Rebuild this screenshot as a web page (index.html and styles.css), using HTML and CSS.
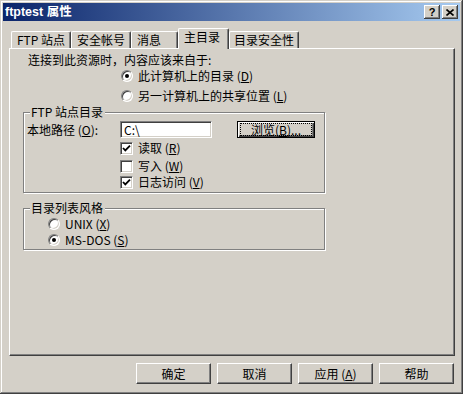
FILE: index.html
```html
<!DOCTYPE html>
<html lang="zh-CN">
<head>
    <meta charset="UTF-8">
    <meta name="viewport" content="width=device-width, initial-scale=1.0">
    <title>ftptest 属性</title>
    <link rel="stylesheet" href="styles.css">
</head>
<body>
    <div class="window">
        <div class="titlebar">
            <span class="title">ftptest 属性</span>
            <div class="caption-buttons">
                <span class="cap-btn help">?</span>
                <span class="cap-btn">
                    <svg width="8" height="7" viewBox="0 0 8 7"><path d="M0.5 0.5 L7.5 6.5 M7.5 0.5 L0.5 6.5" stroke="#000" stroke-width="1.6" fill="none"/></svg>
                </span>
            </div>
        </div>

        <div class="tabs">
            <div class="tab tab-ftp">FTP 站点</div>
            <div class="tab tab-account">安全帐号</div>
            <div class="tab tab-msg">消息</div>
            <div class="tab tab-home selected">主目录</div>
            <div class="tab tab-security">目录安全性</div>
        </div>

        <div class="panel">
            <p class="intro">连接到此资源时，内容应该来自于:</p>
            <div class="option source-first"><span class="radio checked"></span>此计算机上的目录 (<u>D</u>)</div>
            <div class="option source-second"><span class="radio"></span>另一计算机上的共享位置 (<u>L</u>)</div>

            <fieldset class="group site-dir">
                <legend>FTP 站点目录</legend>
                <div class="path-row">
                    <span class="path-label">本地路径 (<u>O</u>):</span>
                    <span class="textbox">C:\</span>
                    <span class="btn focused"><span class="focus-ring">浏览(<u>B</u>)...</span></span>
                </div>
                <div class="option check-read"><span class="checkbox checked"><svg width="9" height="9" viewBox="0 0 9 9"><path d="M1 4 L3.3 6.4 L8 1.6" stroke="#000" stroke-width="1.8" fill="none"/></svg></span>读取 (<u>R</u>)</div>
                <div class="option check-write"><span class="checkbox"></span>写入 (<u>W</u>)</div>
                <div class="option check-log"><span class="checkbox checked"><svg width="9" height="9" viewBox="0 0 9 9"><path d="M1 4 L3.3 6.4 L8 1.6" stroke="#000" stroke-width="1.8" fill="none"/></svg></span>日志访问 (<u>V</u>)</div>
            </fieldset>

            <fieldset class="group list-style">
                <legend>目录列表风格</legend>
                <div class="option style-unix"><span class="radio"></span>UNIX (<u>X</u>)</div>
                <div class="option style-dos"><span class="radio checked"></span>MS-DOS (<u>S</u>)</div>
            </fieldset>
        </div>

        <div class="actions">
            <span class="btn">确定</span>
            <span class="btn">取消</span>
            <span class="btn">应用 (<u>A</u>)</span>
            <span class="btn">帮助</span>
        </div>
    </div>
</body>
</html>
```

FILE: styles.css
```css
*{
    margin:0;
    padding:0;
    box-sizing:border-box;
}
body{
    background-color:#D4D0C8;
    font-family:"Noto Sans CJK SC", sans-serif;
    font-size:12px;
    line-height:16px;
    color:#000;
}
u{
    text-decoration:underline;
    text-underline-offset:1px;
}
.window{
    width:463px;
    height:394px;
    padding:3px;
    background-color:#D4D0C8;
    box-shadow:inset -1px -1px #404040, inset 1px 1px #D4D0C8, inset -2px -2px #808080, inset 2px 2px #fff;
    display:flex;
    flex-direction:column;
}
.titlebar{
    height:18px;
    display:flex;
    align-items:center;
    justify-content:space-between;
    padding:0 2px 0 2px;
    background:linear-gradient(to right, #0A246A, #A6CAF0);
}
.title{
    color:#fff;
    font-family:"Liberation Sans", "Noto Sans CJK SC", sans-serif;
    font-weight:bold;
    font-size:12.5px;
}
.caption-buttons{
    display:flex;
    gap:2px;
}
.cap-btn{
    width:16px;
    height:14px;
    display:flex;
    align-items:center;
    justify-content:center;
    background-color:#D4D0C8;
    box-shadow:inset -1px -1px #404040, inset 1px 1px #fff, inset -2px -2px #808080;
}
.help{
    font-family:"Liberation Sans", sans-serif;
    font-weight:bold;
    font-size:11px;
    line-height:14px;
    padding-bottom:1px;
}
.tabs{
    margin-top:7px;
    height:20px;
    padding-left:8px;
    display:flex;
    align-items:flex-end;
    position:relative;
    z-index:1;
}
.tab{
    height:17px;
    padding-left:5px;
    line-height:16px;
    border:1px solid #fff;
    border-right-color:#404040;
    border-bottom:none;
    border-radius:2px 2px 0 0;
    box-shadow:inset -1px 0 #808080;
    white-space:nowrap;
}
.tab-ftp{ width:60px; }
.tab-account{ width:60px; }
.tab-msg{ width:47px; }
.tab-home{ width:51px; }
.tab-security{ width:70px; padding-left:4px; }
.tab.selected{
    height:21px;
    margin-bottom:-1px;
    line-height:15px;
    background-color:#D4D0C8;
}
.panel{
    margin-left:6px;
    width:446px;
    height:308px;
    border:1px solid;
    border-color:#fff #404040 #404040 #fff;
    box-shadow:inset -1px -1px #808080;
    display:flex;
    flex-direction:column;
    align-items:flex-start;
}
.intro{
    margin:3px 0 0 18px;
}
.option{
    display:flex;
    align-items:center;
    height:16px;
    white-space:nowrap;
}
.source-first{
    margin-left:111px;
}
.source-second{
    margin:4px 0 0 111px;
}
.radio{
    width:12px;
    height:12px;
    margin-right:5px;
    border-radius:50%;
    border:1px solid;
    border-color:#808080 #fff #fff #808080;
    box-shadow:inset 1px 1px #404040, inset -1px -1px #D4D0C8;
    background-color:#fff;
    display:flex;
    align-items:center;
    justify-content:center;
}
.radio.checked::after{
    content:"";
    width:4px;
    height:4px;
    border-radius:50%;
    background-color:#000;
}
.checkbox{
    width:13px;
    height:13px;
    margin-right:5px;
    border:1px solid;
    border-color:#808080 #fff #fff #808080;
    box-shadow:inset 1px 1px #404040, inset -1px -1px #D4D0C8;
    background-color:#fff;
    display:flex;
    align-items:center;
    justify-content:center;
}
.group{
    width:302px;
    border:1px solid #808080;
    box-shadow:1px 1px 0 #fff, inset 1px 1px 0 #fff;
    padding:0 0 2px 0;
    min-inline-size:0;
}
.group legend{
    line-height:14px;
    margin-left:6px;
    padding:0 2px 0 1px;
    background-color:#D4D0C8;
}
.site-dir{
    margin:1px 0 0 13px;
}
.list-style{
    margin:8px 0 0 13px;
    padding-bottom:1px;
}
.path-row{
    display:flex;
    align-items:center;
    height:17px;
    margin-top:2px;
}
.path-label{
    width:96px;
    padding-left:3px;
}
.textbox{
    width:92px;
    height:17px;
    padding-left:3px;
    line-height:15px;
    background-color:#fff;
    border:1px solid;
    border-color:#808080 #fff #fff #808080;
    box-shadow:inset 1px 1px #404040, inset -1px -1px #D4D0C8;
}
.btn{
    display:flex;
    align-items:center;
    justify-content:center;
    width:75px;
    height:21px;
    background-color:#D4D0C8;
    border:1px solid;
    border-color:#fff #404040 #404040 #fff;
    box-shadow:inset -1px -1px #808080;
    white-space:nowrap;
}
.btn.focused{
    width:78px;
    height:17px;
    margin-left:25px;
    border:1px solid #000;
    box-shadow:inset 1px 1px #fff, inset -1px -1px #404040, inset -2px -2px #808080;
}
.focus-ring{
    width:70px;
    height:11px;
    line-height:11px;
    text-align:center;
    outline:1px dotted #000;
}
.check-read{
    margin:2px 0 0 96px;
}
.check-write{
    margin:2px 0 0 96px;
}
.check-log{
    margin-left:96px;
}
.style-unix{
    margin:1px 0 0 24px;
}
.style-dos{
    margin-left:24px;
}
.actions{
    margin-top:7px;
    display:flex;
    justify-content:flex-end;
    gap:6px;
    padding-right:6px;
}
```
